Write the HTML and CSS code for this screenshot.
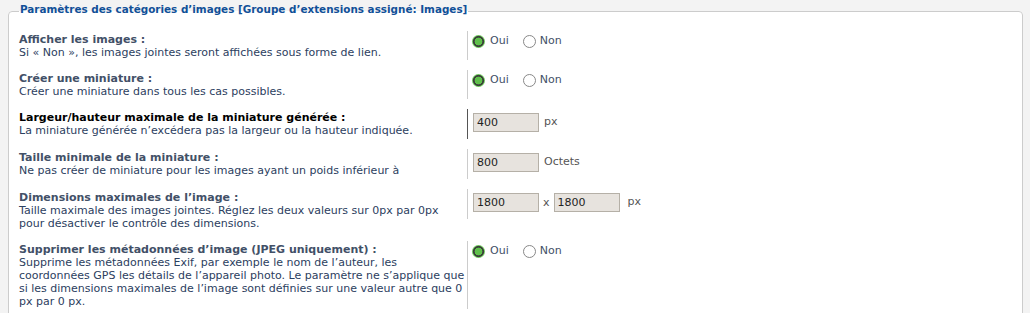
FILE: index.html
```html
<!DOCTYPE html>
<html lang="fr">
  <head>
    <meta charset="UTF-8" />
    <title>Paramètres des catégories d’images</title>
    <link rel="stylesheet" href="styles.css">
  </head>
  <body>
    <div class="page">
      <fieldset class="settings">
        <legend>Paramètres des catégories d’images [Groupe d’extensions assigné: Images]</legend>

        <dl>
          <dt>
            <label>Afficher les images :</label>
            <span class="explain">Si « Non », les images jointes seront affichées sous forme de lien.</span>
          </dt>
          <dd>
            <label class="choice"><input type="radio" name="img_display" checked /> Oui</label>
            <label class="choice"><input type="radio" name="img_display" /> Non</label>
          </dd>
        </dl>

        <dl>
          <dt>
            <label>Créer une miniature :</label>
            <span class="explain">Créer une miniature dans tous les cas possibles.</span>
          </dt>
          <dd>
            <label class="choice"><input type="radio" name="img_thumb" checked /> Oui</label>
            <label class="choice"><input type="radio" name="img_thumb" /> Non</label>
          </dd>
        </dl>

        <dl class="hover">
          <dt>
            <label>Largeur/hauteur maximale de la miniature générée :</label>
            <span class="explain">La miniature générée n’excédera pas la largeur ou la hauteur indiquée.</span>
          </dt>
          <dd class="fields">
            <input class="num" type="text" value="400" />
            <span class="unit">px</span>
          </dd>
        </dl>

        <dl>
          <dt>
            <label>Taille minimale de la miniature :</label>
            <span class="explain">Ne pas créer de miniature pour les images ayant un poids inférieur à</span>
          </dt>
          <dd class="fields">
            <input class="num" type="text" value="800" />
            <span class="unit">Octets</span>
          </dd>
        </dl>

        <dl>
          <dt>
            <label>Dimensions maximales de l’image :</label>
            <span class="explain">Taille maximale des images jointes. Réglez les deux valeurs sur 0px par 0px pour désactiver le contrôle des dimensions.</span>
          </dt>
          <dd class="fields">
            <input class="num" type="text" value="1800" />
            <span class="unit times">x</span>
            <input class="num" type="text" value="1800" />
            <span class="unit last">px</span>
          </dd>
        </dl>

        <dl>
          <dt>
            <label>Supprimer les métadonnées d’image (JPEG uniquement) :</label>
            <span class="explain">Supprime les métadonnées Exif, par exemple le nom de l’auteur, les coordonnées GPS les détails de l’appareil photo. Le paramètre ne s’applique que si les dimensions maximales de l’image sont définies sur une valeur autre que 0 px par 0 px.</span>
          </dt>
          <dd>
            <label class="choice"><input type="radio" name="img_strip" checked /> Oui</label>
            <label class="choice"><input type="radio" name="img_strip" /> Non</label>
          </dd>
        </dl>
      </fieldset>
    </div>
  </body>
</html>
```

FILE: styles.css
```css
*,
*::before,
*::after {
  box-sizing: border-box;
  margin: 0;
  padding: 0;
}

body {
  background-color: #f3f3f3;
  font-family: "DejaVu Sans", Verdana, sans-serif;
  font-size: 11px;
  color: #425067;
  overflow: hidden;
}

.page {
  padding: 2px 7px 0 8px;
}

.settings {
  background-color: #fff;
  border: 1px solid #ccc;
  border-radius: 4px;
  padding: 11px 10px 40px 10px;
}

.settings legend {
  font-weight: bold;
  font-size: 10.4px;
  color: #115098;
  padding: 0 1px 4px;
  line-height: 14px;
}

dl {
  display: flex;
  margin-bottom: 10px;
}

dt {
  width: 448px;
  padding: 2px 0 1px;
  line-height: 13px;
}

dt label {
  display: block;
  font-weight: bold;
  color: #425067;
}

.explain {
  display: block;
  color: #2c4060;
}

dl.hover dt label {
  color: #000;
}

dd {
  flex: 1;
  border-left: 1px solid #ccc;
  padding: 3px 0 0 4px;
  display: flex;
  align-items: flex-start;
}

dl.hover dd {
  border-left-color: #555;
}

dd.fields {
  align-items: center;
  align-self: flex-start;
  padding: 4px 0 7px 5px;
}

.choice {
  display: inline-flex;
  align-items: center;
  margin-right: 14px;
  color: #425067;
  line-height: 14px;
}

.choice input {
  appearance: none;
  width: 13px;
  height: 13px;
  border-radius: 50%;
  border: 1px solid #888;
  background: #fff;
  margin-right: 4px;
}

.choice input:checked {
  border: none;
  margin-right: 5px;
  background: radial-gradient(circle, #5fbf4b 0 3.6px, #3a3f3a 4.2px 5.2px, #6cc55a 5.8px);
}

.num {
  width: 66px;
  height: 19px;
  border: 1px solid #b5b0a7;
  background: #e7e3de;
  font-family: "DejaVu Sans", Verdana, sans-serif;
  font-size: 11px;
  color: #222;
  padding: 1px 3px;
}

.unit {
  color: #555;
  line-height: 14px;
  margin: -2px 0 0 5px;
}

.unit.times {
  margin: 0 4px 0 4px;
}

.unit.last {
  margin-left: 8px;
}
```
